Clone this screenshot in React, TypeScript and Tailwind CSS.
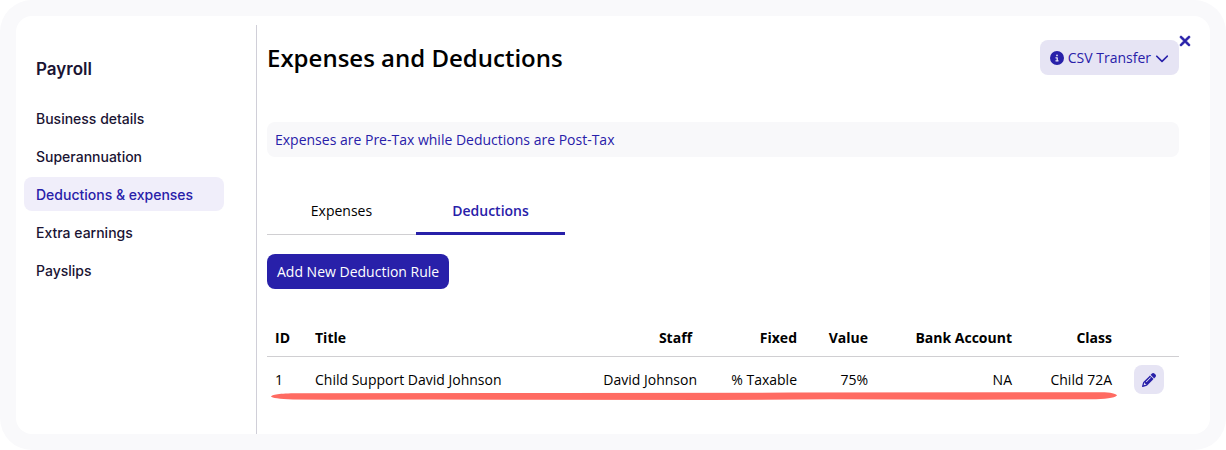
import { FaChevronDown, FaCircleInfo, FaPencil, FaXmark } from "react-icons/fa6";

const navItems = ["Business details", "Superannuation", "Deductions & expenses", "Extra earnings", "Payslips"];

const rules = [
  {
    id: 1,
    title: "Child Support David Johnson",
    staff: "David Johnson",
    fixed: "% Taxable",
    value: "75%",
    account: "NA",
    category: "Child 72A"
  }
];

function Sidebar({ active }: { active: string }) {
  return (
    <aside className="w-60 shrink-0 px-2 pt-[41px] font-['Inter',sans-serif] text-[#1a1433]">
      <h2 className="px-3 text-[17px] leading-6 font-semibold">Payroll</h2>
      <nav className="mt-5 flex w-[200px] flex-col gap-1">
        {navItems.map((item) => (
          <a
            key={item}
            href="#"
            className={`flex h-[34px] items-center rounded-lg px-3 pt-[2px] text-sm font-medium ${
              item === active ? "bg-[#f0eefa] text-[#2820a9]" : ""
            }`}
          >
            {item}
          </a>
        ))}
      </nav>
    </aside>
  );
}

function RulesTable() {
  return (
    <div className="relative mt-8">
      <table className="w-full table-fixed border-collapse text-right">
        <colgroup>
          <col className="w-10" />
          <col />
          <col className="w-[120px]" />
          <col className="w-[100px]" />
          <col className="w-[71px]" />
          <col className="w-36" />
          <col className="w-[100px]" />
          <col className="w-[59px]" />
        </colgroup>
        <thead>
          <tr className="h-[35px] border-b border-[#d0cfd2]">
            <th className="px-2 text-left">ID</th>
            <th className="px-2 text-left">Title</th>
            <th className="pr-[13px] pl-2">Staff</th>
            <th className="px-2">Fixed</th>
            <th className="px-2">Value</th>
            <th className="px-2">Bank Account</th>
            <th className="px-2">Class</th>
            <td />
          </tr>
        </thead>
        <tbody>
          {rules.map((rule) => (
            <tr key={rule.id} className="h-[47px]">
              <td className="px-2 text-left">{rule.id}</td>
              <td className="px-2 text-left">{rule.title}</td>
              <td className="px-2">{rule.staff}</td>
              <td className="px-2">{rule.fixed}</td>
              <td className="px-2">{rule.value}</td>
              <td className="px-2">{rule.account}</td>
              <td className="px-2">{rule.category}</td>
              <td>
                <button
                  type="button"
                  aria-label={`Edit ${rule.title}`}
                  className="ml-[14px] flex h-[29px] w-[30px] items-center justify-center rounded-lg bg-[#e6e4f4] text-[#2820a9]"
                >
                  <FaPencil size={14} />
                </button>
              </td>
            </tr>
          ))}
        </tbody>
      </table>
      <svg
        className="pointer-events-none absolute inset-x-1 bottom-[3px] h-2 w-[calc(100%-66px)]"
        viewBox="0 0 846 8"
        preserveAspectRatio="none"
        aria-hidden="true"
      >
        <path
          d="M0 4.5C2 2 10 1.2 30 1.2L290 1L520 0.6L830 0.2C840 0.3 845 1.8 846 3.2C846 4.8 838 7 825 7.2L700 7.8L560 7.2L440 8L260 7.8L160 7.4L60 7.8L22 7.4C8 7 1 6 0 4.5Z"
          fill="#ff6b62"
        />
      </svg>
    </div>
  );
}

export default function App() {
  return (
    <div className="rounded-[32px] bg-[#f9f9fb] p-4 font-['Open_Sans',sans-serif] text-sm text-black">
      <div className="relative flex min-h-[418px] rounded-2xl bg-white">
        <Sidebar active="Deductions & expenses" />
        <main className="mt-[9px] min-w-0 flex-1 border-l border-[#d0cfd8] pt-[15px] pr-[31px] pl-[10px]">
          <header className="flex items-center justify-between">
            <h1 className="text-2xl font-semibold">Expenses and Deductions</h1>
            <button
              type="button"
              className="flex h-[35px] items-center gap-1 rounded-lg bg-[#e6e4f4] px-[10px] text-[#2820a9]"
            >
              <FaCircleInfo size={14} />
              CSV Transfer
              <FaChevronDown size={14} />
            </button>
          </header>

          <p className="mt-[47px] flex h-[35px] items-center rounded-lg bg-[#f8f8fa] px-2 text-[#2820a9]">
            Expenses are Pre-Tax while Deductions are Post-Tax
          </p>

          <div role="tablist" className="mt-[31px] flex">
            <button type="button" role="tab" aria-selected="false" className="h-[47px] w-[149px] border-b border-[#d0cfd2]">
              Expenses
            </button>
            <button
              type="button"
              role="tab"
              aria-selected="true"
              className="h-[47px] w-[149px] border-b-3 border-[#2820a9] pt-[2px] font-semibold text-[#2820a9]"
            >
              Deductions
            </button>
          </div>

          <button type="button" className="mt-[19px] block h-[35px] rounded-lg bg-[#2820a9] px-[10px] font-medium text-white">
            Add New Deduction Rule
          </button>

          <RulesTable />
        </main>
        <button type="button" aria-label="Close" className="absolute top-[17px] right-[17px] text-[#2820a9]">
          <FaXmark size={16} stroke="currentColor" strokeWidth={24} />
        </button>
      </div>
    </div>
  );
}
